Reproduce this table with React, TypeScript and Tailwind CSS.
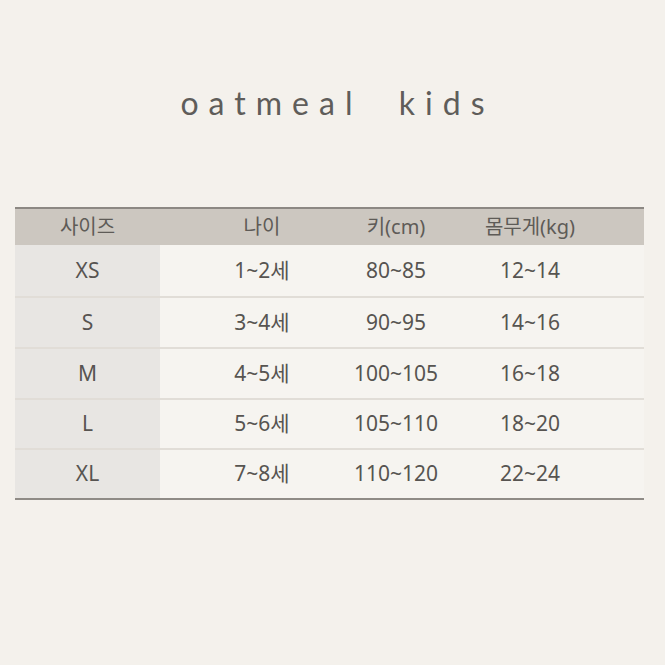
const rows = [
  { size: "XS", age: "1~2세", height: "80~85", weight: "12~14", h: "h-[51px]" },
  { size: "S", age: "3~4세", height: "90~95", weight: "14~16", h: "h-[51px]" },
  { size: "M", age: "4~5세", height: "100~105", weight: "16~18", h: "h-[51px]" },
  { size: "L", age: "5~6세", height: "105~110", weight: "18~20", h: "h-[50px]" },
  { size: "XL", age: "7~8세", height: "110~120", weight: "22~24", h: "h-[50px]" },
]

const font = { fontFamily: '"Noto Sans", "Noto Sans CJK KR", sans-serif' }

export default function App() {
  return (
    <div className="w-[665px] h-[665px] bg-[#f4f1ec] pt-[83px] px-[15px]" style={font}>
      <h1
        className="text-center text-[32px] leading-[40px] tracking-[10px] text-[#5f5d5a] pl-[10px]"
        style={{ fontFamily: 'Lato, "Open Sans", sans-serif' }}
      >
        oatmeal{"\u00a0\u00a0"}kids
      </h1>

      <div className="mt-[84px] w-[629px] border-t-2 border-b-2 border-t-[#8c8883] border-b-[#8f8b86]">
        <div className="grid grid-cols-[145px_204px_64px_204px_1fr] h-[36px] bg-[#ccc7c0] text-[20px] text-[#5e5b57] items-center">
          <div className="text-center">사이즈</div>
          <div className="text-center">나이</div>
          <div className="flex justify-center whitespace-nowrap">키(cm)</div>
          <div className="flex justify-center whitespace-nowrap">몸무게(kg)</div>
          <div />
        </div>
        {rows.map((r, i) => (
          <div
            key={r.size}
            className={`grid grid-cols-[145px_204px_64px_204px_1fr] box-border ${r.h} bg-[#f6f4f0] text-[21px] text-[#575451] ${
              i > 0 ? "border-t-2 border-[#e1ddd7]" : ""
            }`}
          >
            <div className="flex items-center justify-center bg-[#e8e6e3]">{r.size}</div>
            <div className="flex items-center justify-center">{r.age}</div>
            <div className="flex items-center justify-center whitespace-nowrap">{r.height}</div>
            <div className="flex items-center justify-center">{r.weight}</div>
            <div />
          </div>
        ))}
      </div>
    </div>
  )
}
